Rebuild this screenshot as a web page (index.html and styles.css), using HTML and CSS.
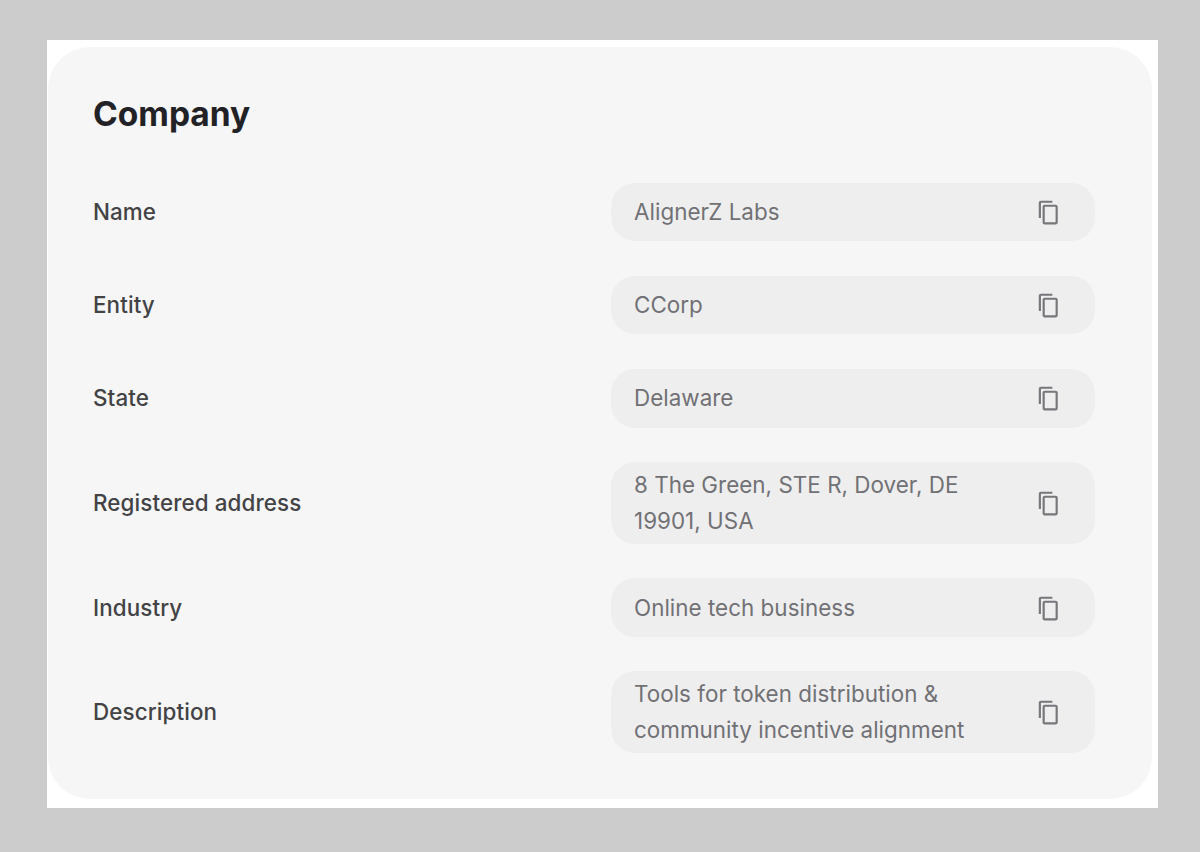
FILE: index.html
```html
<!DOCTYPE html>
<html lang="en">
<head>
  <meta charset="UTF-8" />
  <meta name="viewport" content="width=device-width, initial-scale=1.0"/>
  <title>Company</title>
  <link rel="stylesheet" href="styles.css">
</head>
<body>
  <svg class="icon-defs" width="0" height="0">
    <symbol id="copy" viewBox="0 0 24 24">
      <path d="M16 1.5H5.5c-1.2 0-2 .8-2 2V17.5h2V3.5H16z"/>
      <path d="M19 5.2H9c-1.2 0-2 .8-2 2v14.3c0 1.2.8 2 2 2h10c1.2 0 2-.8 2-2V7.2c0-1.2-.8-2-2-2zm0 16.3H9V7.2h10z"/>
    </symbol>
  </svg>

  <div class="frame">
    <div class="card">
      <h2>Company</h2>

      <div class="row">
        <span class="label">Name</span>
        <div class="field">
          <span class="value">AlignerZ Labs</span>
          <svg class="copy-icon"><use href="#copy"/></svg>
        </div>
      </div>

      <div class="row">
        <span class="label">Entity</span>
        <div class="field">
          <span class="value">CCorp</span>
          <svg class="copy-icon"><use href="#copy"/></svg>
        </div>
      </div>

      <div class="row">
        <span class="label">State</span>
        <div class="field">
          <span class="value">Delaware</span>
          <svg class="copy-icon"><use href="#copy"/></svg>
        </div>
      </div>

      <div class="row">
        <span class="label">Registered address</span>
        <div class="field tall">
          <span class="value">8 The Green, STE R, Dover, DE 19901, USA</span>
          <svg class="copy-icon"><use href="#copy"/></svg>
        </div>
      </div>

      <div class="row">
        <span class="label">Industry</span>
        <div class="field">
          <span class="value">Online tech business</span>
          <svg class="copy-icon"><use href="#copy"/></svg>
        </div>
      </div>

      <div class="row">
        <span class="label">Description</span>
        <div class="field tall">
          <span class="value">Tools for token distribution &amp; community incentive alignment</span>
          <svg class="copy-icon"><use href="#copy"/></svg>
        </div>
      </div>
    </div>
  </div>
</body>
</html>
```

FILE: styles.css
```css
html, body {
  height: 100%;
}
body {
  font-family: 'Inter', 'Liberation Sans', sans-serif;
  background: #cccccc;
  margin: 0;
  padding: 40px 42px 43px 47px;
  box-sizing: border-box;
}
.icon-defs {
  display: block;
  height: 0;
}
.frame {
  background: #fff;
  padding: 7px 6px 9px 1px;
}
.card {
  background: #f6f6f7;
  border-radius: 42px;
  padding: 45px 57px 46px 45px;
  display: flex;
  flex-direction: column;
  gap: 34.6px;
}
h2 {
  margin: 0 0 12px;
  font-size: 33.5px;
  line-height: 44px;
  font-weight: 700;
  color: #222226;
}
.row {
  display: flex;
  align-items: center;
  justify-content: space-between;
}
.label {
  font-size: 22.4px;
  font-weight: 500;
  line-height: 36px;
  letter-spacing: 0.1px;
  color: #434346;
}
.field {
  width: 484px;
  min-height: 58.6px;
  box-sizing: border-box;
  padding: 0 34px 0 23px;
  background: #eeeeef;
  border-radius: 24px;
  display: flex;
  align-items: center;
  justify-content: space-between;
}
.field.tall {
  min-height: 81.5px;
}
.value {
  width: 350px;
  font-size: 22.4px;
  line-height: 36px;
  letter-spacing: 0.03px;
  color: #717175;
}
.copy-icon {
  width: 26px;
  height: 26px;
  fill: #77777b;
  flex-shrink: 0;
}
```
